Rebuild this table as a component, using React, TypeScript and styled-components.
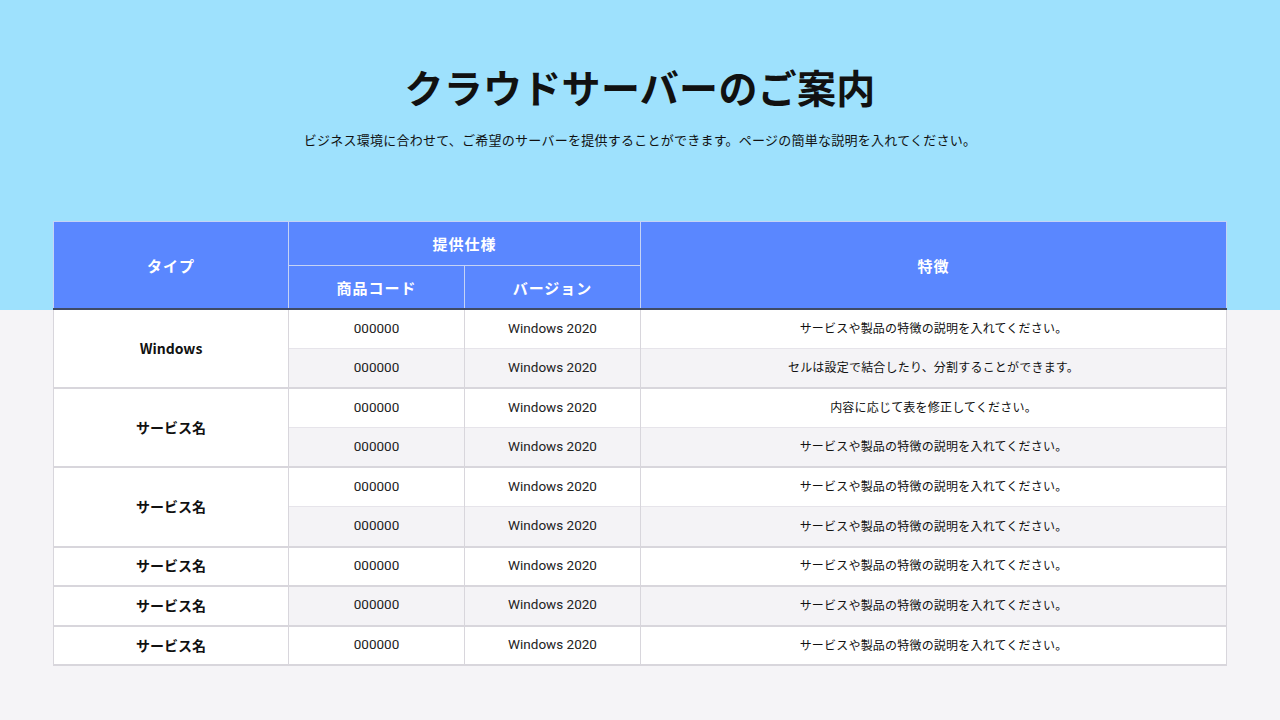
import * as React from 'react'
import styled, { createGlobalStyle } from 'styled-components'

const GlobalStyle = createGlobalStyle`
  body {
    margin: 0;
    background: #f5f4f7;
    font-family: "Noto Sans CJK JP", "Noto Sans", sans-serif;
    color: #111;
  }
`

const Page = styled.div`
  width: 1280px;
  height: 720px;
  background: linear-gradient(#9ee1fd 0, #9ee1fd 310px, #f5f4f7 310px);
  display: flex;
  flex-direction: column;
  align-items: center;
`

const Title = styled.h1`
  margin: 58px 0 0;
  font-size: 39px;
  font-weight: 700;
  line-height: 56px;
  letter-spacing: 0.3px;
`

const Lead = styled.p`
  margin: 16px 0 0;
  font-size: 13px;
  line-height: 20px;
  letter-spacing: 0.25px;
`

const Table = styled.table`
  margin-top: 71px;
  width: 1174px;
  border-collapse: collapse;
  table-layout: fixed;
  font-size: 12px;
`

const Th = styled.th<{ $h: number; $bottom?: boolean }>`
  height: ${p => p.$h}px;
  background: #5a87ff;
  color: #fff;
  font-size: 15px;
  font-weight: 700;
  border: 1px solid #c5d3f5;
  border-bottom: ${p => (p.$bottom ? '2px solid #3f4b66' : '1px solid #c5d3f5')};
  padding: 0;
  letter-spacing: 1px;
`

const Tr = styled.tr<{ $gray: boolean; $groupEnd: boolean }>`
  height: 39.6px;
  background: ${p => (p.$gray ? '#f4f3f6' : '#fff')};
  border-bottom: ${p => (p.$groupEnd ? '2px solid #d8d6dc' : '1px solid #e6e4ea')};
`

const TypeCell = styled.td`
  background: #fff;
  font-size: 14px;
  font-weight: 700;
  text-align: center;
  padding: 0 0 2px;
  border-left: 1px solid #d8d6dc;
  border-right: 1px solid #d8d6dc;
  font-family: "Noto Sans CJK JP", "Noto Sans", sans-serif;
`

const Td = styled.td`
  text-align: center;
  padding: 0 0 3px;
  border-right: 1px solid #d8d6dc;
  color: #222;
  font-size: 13.5px;
  font-family: Roboto, "Noto Sans CJK JP", sans-serif;
`

const Feature = styled(Td)`
  font-family: "Noto Sans CJK JP", sans-serif;
  font-size: 12px;
  letter-spacing: 0.2px;
  color: #111;
`

const desc = 'サービスや製品の特徴の説明を入れてください。'

type Group = { type: string; features: string[] }

const groups: Group[] = [
  { type: 'Windows', features: [desc, 'セルは設定で結合したり、分割することができます。'] },
  { type: 'サービス名', features: ['内容に応じて表を修正してください。', desc] },
  { type: 'サービス名', features: [desc, desc] },
  { type: 'サービス名', features: [desc] },
  { type: 'サービス名', features: [desc] },
  { type: 'サービス名', features: [desc] },
]

export default function App() {
  let idx = 0
  return (
    <Page>
      <GlobalStyle />
      <Title>クラウドサーバーのご案内</Title>
      <Lead>ビジネス環境に合わせて、ご希望のサーバーを提供することができます。ページの簡単な説明を入れてください。</Lead>
      <Table>
        <colgroup>
          <col style={{ width: 235 }} />
          <col style={{ width: 176 }} />
          <col style={{ width: 176 }} />
          <col />
        </colgroup>
        <thead>
          <tr>
            <Th $h={86} rowSpan={2} $bottom>タイプ</Th>
            <Th $h={43} colSpan={2}>提供仕様</Th>
            <Th $h={86} rowSpan={2} $bottom>特徴</Th>
          </tr>
          <tr>
            <Th $h={42} $bottom>商品コード</Th>
            <Th $h={42} $bottom>バージョン</Th>
          </tr>
        </thead>
        <tbody>
          {groups.map((g, gi) =>
            g.features.map((f, fi) => {
              const gray = idx % 2 === 1
              idx++
              return (
                <Tr key={`${gi}-${fi}`} $gray={gray} $groupEnd={fi === g.features.length - 1}>
                  {fi === 0 && <TypeCell rowSpan={g.features.length}>{g.type}</TypeCell>}
                  <Td>000000</Td>
                  <Td>Windows 2020</Td>
                  <Feature>{f}</Feature>
                </Tr>
              )
            })
          )}
        </tbody>
      </Table>
    </Page>
  )
}
